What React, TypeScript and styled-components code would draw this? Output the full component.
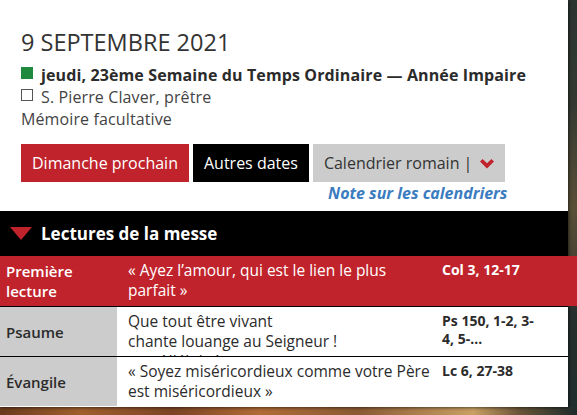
import React from "react";
import styled, { createGlobalStyle } from "styled-components";

const GlobalStyle = createGlobalStyle`
  html, body { margin: 0; padding: 0; }
  body {
    font-family: "Open Sans", "Liberation Sans", sans-serif;
    color: #333;
    background: #222;
  }
  * { box-sizing: border-box; }
`;

const Page = styled.div`
  min-height: 100vh;
  overflow: hidden;
  background:
    linear-gradient(to right, #6b3b1c 0%, #a0602e 14%, #7c4424 30%, #b06c36 45%, #8a5a33 62%, #caa064 82%, #6a5538 90%, #1d2c2c 100%) bottom / 100% 8px no-repeat,
    linear-gradient(to bottom, #2a3431 0%, #343a32 25%, #5a4f37 50%, #4a4434 62%, #26302e 75%, #1f2e2d 100%);
`;

const Panel = styled.div`
  width: 568px;
  background: #fff;
  box-shadow: 1px 1px 3px rgba(0, 0, 0, 0.55);
  padding-bottom: 1px;
`;

const Header = styled.header`
  padding: 26px 0 0 21px;
`;

const Title = styled.h1`
  margin: 0;
  font-size: 23.5px;
  line-height: 32px;
  font-weight: 400;
  color: #333;
`;

const Info = styled.div`
  margin-top: 6px;
  font-size: 16px;
  line-height: 22px;
  letter-spacing: 0.12px;
`;

const InfoLine = styled.div<{ $bold?: boolean }>`
  display: flex;
  align-items: flex-start;
  gap: 8px;
  font-weight: ${(p) => (p.$bold ? 700 : 400)};
  color: ${(p) => (p.$bold ? "#2b2b2b" : "#444")};
`;

const Swatch = styled.span<{ $color?: string }>`
  flex: none;
  width: 12px;
  height: 12px;
  margin-top: 3px;
  background: ${(p) => p.$color || "transparent"};
  border: ${(p) => (p.$color ? "none" : "1px solid #555")};
`;

const Actions = styled.div`
  display: inline-flex;
  flex-direction: column;
  align-items: flex-end;
  margin-top: 14px;
`;

const ButtonRow = styled.div`
  display: flex;
  gap: 4px;
`;

const Button = styled.button<{ $variant: "red" | "black" | "gray" }>`
  border: none;
  margin: 0;
  height: 38px;
  padding: 0 11px;
  font-family: inherit;
  font-size: 16px;
  line-height: 38px;
  display: flex;
  align-items: center;
  gap: 6px;
  background: ${(p) =>
    p.$variant === "red" ? "#c1232c" : p.$variant === "black" ? "#000" : "#cccccc"};
  color: ${(p) => (p.$variant === "gray" ? "#333" : "#fff")};
`;

const Chevron = styled.svg`
  width: 14px;
  height: 10px;
  margin-left: 2px;
  margin-top: 1px;
`;

const NoteLink = styled.a`
  font-size: 16px;
  line-height: 22px;
  font-weight: 700;
  font-style: italic;
  color: #3a7cbf;
  text-decoration: none;
  margin-right: -2px;
`;

const SectionBar = styled.div`
  margin-top: 7px;
  height: 45px;
  background: #000;
  display: flex;
  align-items: center;
  gap: 9px;
  padding-left: 10px;
  color: #fff;
  font-size: 17px;
  font-weight: 700;
`;

const Triangle = styled.svg`
  width: 22px;
  height: 13px;
  flex: none;
`;

const Table = styled.div`
  display: flex;
  flex-direction: column;
`;

const Row = styled.div<{ $active?: boolean }>`
  display: grid;
  grid-template-columns: 117px 320px 1fr;
  height: 50px;
  background: ${(p) => (p.$active ? "#c1232c" : "#fff")};
  color: ${(p) => (p.$active ? "#fff" : "#2b2b2b")};
  margin-right: ${(p) => (p.$active ? "-9px" : "0")};
  border-top: ${(p) => (p.$active ? "none" : "1px solid #000")};
`;

const LabelCell = styled.div<{ $active?: boolean }>`
  background: ${(p) => (p.$active ? "transparent" : "#cccccc")};
  padding: 0 4px 0 6px;
  font-size: 15px;
  line-height: 20px;
  font-weight: 600;
  display: flex;
  align-items: center;
`;

const TextCell = styled.div`
  padding: 4px 4px 0 11px;
  font-size: 15.5px;
  line-height: 20px;
  overflow: hidden;
`;

const RefCell = styled.div`
  padding: 5px 0 0 5px;
  font-size: 14px;
  line-height: 18px;
  font-weight: 700;
`;

const RefText = styled.div`
  max-width: 98px;
`;

const readings = [
  {
    label: "Première lecture",
    text: ["«\u00a0Ayez l’amour, qui est le lien le plus parfait\u00a0»"],
    ref: "Col 3, 12-17",
    active: true,
  },
  {
    label: "Psaume",
    text: ["Que tout être vivant", "chante louange au Seigneur\u00a0!", "ou\u00a0: Alléluia\u00a0!"],
    ref: "Ps 150, 1-2, 3-4, 5-...",
  },
  {
    label: "Évangile",
    text: ["«\u00a0Soyez miséricordieux comme votre Père est miséricordieux\u00a0»"],
    ref: "Lc 6, 27-38",
  },
];

export default function App() {
  return (
    <>
      <GlobalStyle />
      <Page>
        <Panel>
          <Header>
            <Title>9 SEPTEMBRE 2021</Title>
            <Info>
              <InfoLine $bold>
                <Swatch $color="#1f8a3e" />
                <span>jeudi, 23ème Semaine du Temps Ordinaire — Année Impaire</span>
              </InfoLine>
              <InfoLine>
                <Swatch />
                <span>S. Pierre Claver, prêtre</span>
              </InfoLine>
              <InfoLine>Mémoire facultative</InfoLine>
            </Info>
            <Actions>
              <ButtonRow>
                <Button $variant="red">Dimanche prochain</Button>
                <Button $variant="black">Autres dates</Button>
                <Button $variant="gray">
                  Calendrier romain |
                  <Chevron viewBox="0 0 14 10">
                    <polygon points="0,2.6 2.6,0 7,4.3 11.4,0 14,2.6 7,9.6" fill="#c1232c" />
                  </Chevron>
                </Button>
              </ButtonRow>
              <NoteLink href="#">Note sur les calendriers</NoteLink>
            </Actions>
          </Header>
          <SectionBar>
            <Triangle viewBox="0 0 22 13">
              <polygon points="0,0 22,0 11,13" fill="#c1232c" />
            </Triangle>
            Lectures de la messe
          </SectionBar>
          <Table>
            {readings.map((r) => (
              <Row key={r.label} $active={r.active}>
                <LabelCell $active={r.active}>{r.label}</LabelCell>
                <TextCell>
                  {r.text.map((t) => (
                    <div key={t}>{t}</div>
                  ))}
                </TextCell>
                <RefCell>
                  <RefText>{r.ref}</RefText>
                </RefCell>
              </Row>
            ))}
          </Table>
        </Panel>
      </Page>
    </>
  );
}
